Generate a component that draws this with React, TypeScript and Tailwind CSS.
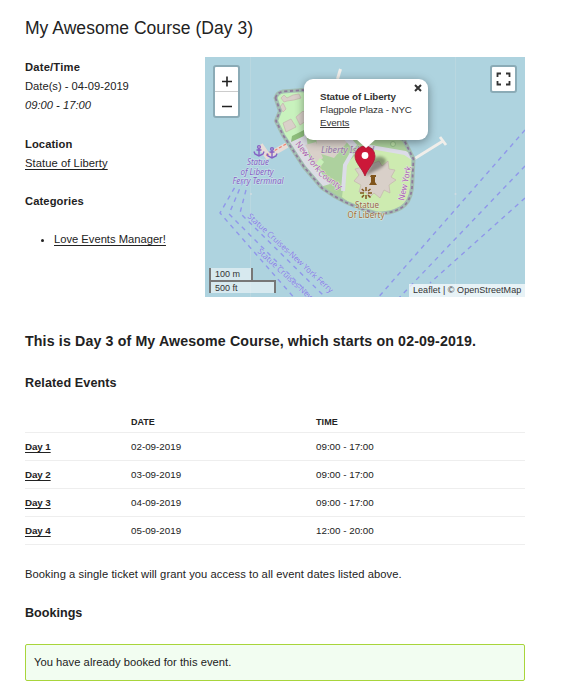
import React from "react";

const days = [
  { name: "Day 1", date: "02-09-2019", time: "09:00 - 17:00" },
  { name: "Day 2", date: "03-09-2019", time: "09:00 - 17:00" },
  { name: "Day 3", date: "04-09-2019", time: "09:00 - 17:00" },
  { name: "Day 4", date: "05-09-2019", time: "12:00 - 20:00" },
];

const ISLAND =
  "M275.500 98 Q277 92.500 283 91.500 L303 90 L404 140 L413.500 159 L412 188 Q410 203 401 208 Q388 215 375 213 Q345 205 322 188 L304 167 L283 135 L276 121 L280 111 Z";

function Anchor({ x, y }: { x: number; y: number }) {
  return (
    <g transform={`translate(${x} ${y})`} fill="none" stroke="#8461c4" strokeWidth="1.4">
      <circle cx="0" cy="-4" r="1.4" />
      <path d="M0 -2.5V4.5M-2.5 -1H2.5M-5 0.5L-4 3L0 5L4 3L5 0.5" />
    </g>
  );
}

function MapCanvas() {
  return (
    <svg className="block h-60 w-80" viewBox="205 57 320 240" fontFamily="'Noto Sans', sans-serif">
      <defs>
        <clipPath id="land"><path d={ISLAND} /></clipPath>
        <filter id="soft" x="-50%" y="-50%" width="200%" height="200%"><feGaussianBlur stdDeviation="1.5" /></filter>
      </defs>
      <rect x="205" y="57" width="320" height="240" fill="#aed3df" />
      <path d="M250.5 57V297M455.5 57V297" stroke="#b9d7e0" strokeWidth="1" />
      <circle cx="455.5" cy="194" r="1" fill="#d0dce2" />
      <circle cx="251" cy="194" r="1" fill="#d0dce2" />

      {/* Piers */}
      <path d="M337.500 79L340.500 69" stroke="#f0eeea" strokeWidth="3" />
      <path d="M414 159L443 141M440 137L446 145" stroke="#f0eeea" strokeWidth="2.8" />
      <path d="M287 145L266 157M260 145L269 158" stroke="#e6dcd8" strokeWidth="6" />
      <path d="M286 144L265 156" stroke="#f0806e" strokeWidth="1.2" strokeDasharray="3 2" />

      <path d={ISLAND} fill="#add19e" />
      <g clipPath="url(#land)">
        <path d="M275 90H306V136L288 142L276 120Z" fill="#c8f2bd" />
        <path d="M288 141L306 132L309 157L330 184L320 187L300 160Z" fill="#dbdce4" />
        <path d="M292 136L304 130V136L291 142Z" fill="#8dbd7b" />
        <path d="M316 137L350 139L334 158L318 153Z" fill="#d9d0c9" />
        <path d="M305 145L316 142L323 158L316 164Z" fill="#d9d0c9" />
        <path d="M314 166L320 158L324 162L318 170Z" fill="#c8efb8" />
        <path d="M346 164L366 145L408 152L413 159V215H365L342 197Z" fill="#cdebb0" />
        <path d="M343 191L345 165L352 153M365 146L405 153L414 159" fill="none" stroke="#dcdce8" strokeWidth="4" />
        <path d="M346 137L355 147" stroke="#dcdce8" strokeWidth="6" />
        <circle cx="393" cy="144" r="2.5" fill="#bce0a7" stroke="#93bd88" />
      </g>
      <g fill="#d9d0c9" stroke="#c4b5ad" strokeWidth=".7">
        <path d="M281 98L284 95L287 98L293 95L299 94L301 98L294 100L287 101L284 102ZM280 107L283 103L286 109L283 112ZM283 123L291 119L296 127L286 132ZM296 117L303 111L306 114V121L300 125Z" />
        <path d="M379 161L382 166L388 161L389 169L395 170L391 177L396 180L389 185L390 193L384 190L380 198L374 193L369 198L366 192L359 192L361 185L354 181L359 175L355 169L363 167L364 159L372 164Z" />
      </g>
      <path d={ISLAND} fill="none" stroke="#a3beb2" strokeWidth="4" />
      <path d={ISLAND} fill="none" stroke="#8f7b9c" strokeWidth="1.8" strokeDasharray="3.2 2.6" />

      {/* Ferry routes */}
      <g fill="none" stroke="#9097ea" strokeWidth="1.4" strokeDasharray="4.500 4.500">
        <path d="M239 180L220 213L297 301M243 181L229 214L312 297M246 190L240 213L328 300" />
        <path d="M525 130L376 300M525 166L397 300M525 198L430 283" />
      </g>
      <Anchor x={259} y={151} />
      <Anchor x={272} y={153} />

      <g fontSize="8" fontStyle="italic" fill="#8461c4" stroke="#cfe3ec" strokeWidth="1" paintOrder="stroke" textAnchor="middle">
        <text x="258" y="165" textLength="22" lengthAdjust="spacingAndGlyphs">Statue</text>
        <text x="257" y="174.500" textLength="33" lengthAdjust="spacingAndGlyphs">of Liberty</text>
        <text x="258" y="184" textLength="51" lengthAdjust="spacingAndGlyphs">Ferry Terminal</text>
      </g>
      <g fontSize="8.200" fill="#8983e6" stroke="#bcd8e5" strokeWidth=".8" paintOrder="stroke">
        <text transform="translate(247 217) rotate(42.500)" textLength="113" lengthAdjust="spacingAndGlyphs">Statue Cruises-New York Ferry</text>
        <text transform="translate(257 252) rotate(42.500)" textLength="113" lengthAdjust="spacingAndGlyphs">Statue Cruises-New York Ferry</text>
      </g>
      <text x="321" y="153" fontSize="8" fontStyle="italic" fill="#9a72a9" stroke="#d5dccf" strokeWidth=".8" paintOrder="stroke" textLength="53" lengthAdjust="spacingAndGlyphs">Liberty Island</text>
      <g fontSize="8.500" fill="#a95db3" stroke="#e3e9dc" strokeWidth="1" paintOrder="stroke">
        <text transform="translate(295 144) rotate(52)" textLength="36" lengthAdjust="spacingAndGlyphs">New York</text>
        <text transform="translate(317.500 174.500) rotate(35)" textLength="27" lengthAdjust="spacingAndGlyphs">County</text>
        <text transform="translate(404 201) rotate(-78)" textLength="35" lengthAdjust="spacingAndGlyphs">New York</text>
      </g>
      <g fontSize="8" fill="#9b6842" stroke="#dcebd8" strokeWidth="1" paintOrder="stroke" textAnchor="middle">
        <text x="367" y="208" textLength="24">Statue</text>
        <text x="366" y="217.500" textLength="37">Of Liberty</text>
      </g>
      <path d="M371 175H376V177H375V182L377 185H369L371 182V177H370Z" fill="#80551c" />
      <path d="M366 187V191M366 195V199M360 193H364M368 193H372M361.800 189L364 191M368 195L370.500 197.500M370.500 189L368 191M364 195L361.800 197.500" stroke="#80551c" strokeWidth="1.5" />
      <path d="M365 176L374 158Q382 154 386 160Q386 165 379 169Z" fill="#000" opacity=".35" filter="url(#soft)" />
      <path d="M365 176C362 168 355 163 355 156A10 10 0 0 1 375 156C375 163 368 168 365 176Z" fill="#cc1839" stroke="#a91735" strokeWidth=".8" />
      <circle cx="365" cy="155.500" r="3.400" fill="#fff" />
    </svg>
  );
}

function Popup() {
  return (
    <div className="absolute top-[22px] left-[99px] h-[61px] w-[124px] rounded-[9px] bg-white pt-[11px] pl-4 text-[9.8px] leading-[13px] text-[#333] shadow-[0_2px_10px_rgba(0,0,0,0.4)]">
      <div className="absolute bottom-[-8px] left-[52px] h-[9px] w-5 bg-white [clip-path:polygon(0_0,100%_0,50%_100%)]" />
      <svg className="absolute top-[5px] right-[6px] h-2 w-2" viewBox="0 0 8 8"><path d="M1 1L7 7M7 1L1 7" stroke="#333" strokeWidth="2" /></svg>
      <p className="whitespace-nowrap font-bold tracking-[-0.09px]">Statue of Liberty</p>
      <p className="whitespace-nowrap tracking-[-0.12px]">Flagpole Plaza - NYC</p>
      <a className="underline underline-offset-1 tracking-[-0.09px]">Events</a>
    </div>
  );
}

function EventMap() {
  return (
    <div className="relative h-60 w-80 shrink-0 overflow-hidden">
      <MapCanvas />
      <div className="absolute top-2 left-2 flex h-[53px] w-[27px] flex-col rounded-[3px] border-2 border-[#8babb6] bg-white">
        <svg className="h-full w-full" viewBox="0 0 23 49">
          <path d="M0 24.500H23" stroke="#ccc" />
          <path d="M7 14.500H17M12 9.500V19.500M7 39.500H17" stroke="#222" strokeWidth="1.600" />
        </svg>
      </div>
      <div className="absolute top-2 right-2 h-[28px] w-[27px] rounded-[3px] border-2 border-[#8babb6] bg-white">
        <svg className="h-full w-full" viewBox="0 0 23 24">
          <path d="M5.500 10V6.500H9M14 6.500H17.500V10M5.500 14V17.500H9M14 17.500H17.500V14" fill="none" stroke="#333" strokeWidth="1.800" />
        </svg>
      </div>
      <Popup />
      <div className="absolute bottom-1 left-1 text-[9px] leading-none text-[#333]">
        <div className="h-[12px] w-[44px] border-x-2 border-[#777] bg-white/50 pt-[2px] pl-[4px] whitespace-nowrap">100 m</div>
        <div className="h-[13px] w-[67px] border-2 border-b-0 border-[#777] bg-white/50 pt-[2px] pl-[4px] whitespace-nowrap">500 ft</div>
      </div>
      <div className="absolute right-0 bottom-0 flex h-[13px] w-[116px] items-center bg-white/70 pl-[4px] text-[9px] tracking-[0.05px] whitespace-nowrap text-[#333]">
        Leaflet | © OpenStreetMap
      </div>
    </div>
  );
}

export default function App() {
  return (
    <main className="h-[699px] w-[561px] overflow-hidden bg-white pl-[25px] font-['Liberation_Sans',Arial,sans-serif] text-[11.2px] leading-[19px] text-[#222]">
      <h1 className="pt-[15px] text-[17.5px] leading-[26px] tracking-[0.03px]">My Awesome Course (Day 3)</h1>
      <section className="mt-4 flex">
        <div className="w-[180px]">
          <p className="pt-px"><strong className="tracking-[0.2px]">Date/Time</strong><br />Date(s) - 04-09-2019<br /><em>09:00 - 17:00</em></p>
          <p className="mt-5"><strong className="tracking-[0.1px]">Location</strong><br /><a className="tracking-[0.07px] underline underline-offset-2">Statue of Liberty</a></p>
          <p className="mt-[19px]"><strong className="tracking-[0.1px]">Categories</strong></p>
          <ul className="mt-[19px] list-disc pl-[29px]"><li><a className="underline underline-offset-2">Love Events Manager!</a></li></ul>
        </div>
        <EventMap />
      </section>
      <h2 className="mt-[33px] text-[14.2px] leading-[22px] font-bold tracking-[0.14px] whitespace-nowrap">This is Day 3 of My Awesome Course, which starts on 02-09-2019.</h2>
      <h3 className="mt-[21px] text-[12.6px] leading-[20px] font-bold tracking-[0.1px]">Related Events</h3>
      <table className="mt-[19px] w-[500px] table-fixed border-collapse text-left text-[9.8px] leading-[16px]">
        <colgroup><col className="w-[106px]" /><col className="w-[185px]" /><col /></colgroup>
        <thead>
          <tr className="h-[20px] border-b border-[#eee] align-top text-[9px]"><th /><th className="pt-[2px]">DATE</th><th className="pt-[2px] tracking-[0.1px]">TIME</th></tr>
        </thead>
        <tbody>
          {days.map((day) => (
            <tr key={day.name} className="h-[28px] border-b border-[#eee]">
              <td className="pt-[2px]"><a className="font-bold tracking-[-0.1px] underline underline-offset-2">{day.name}</a></td>
              <td className="pt-[2px]">{day.date}</td>
              <td className="pt-[2px]">{day.time}</td>
            </tr>
          ))}
        </tbody>
      </table>
      <p className="mt-5 tracking-[0.07px]">Booking a single ticket will grant you access to all event dates listed above.</p>
      <h3 className="mt-[19px] text-[12.6px] leading-[20px] font-bold">Bookings</h3>
      <div className="mt-[21px] flex h-[37px] w-[500px] items-center rounded-[2px] border border-[#a8d53b] bg-[#f2fdf1] pl-2 tracking-[0.03px]">You have already booked for this event.</div>
    </main>
  );
}
